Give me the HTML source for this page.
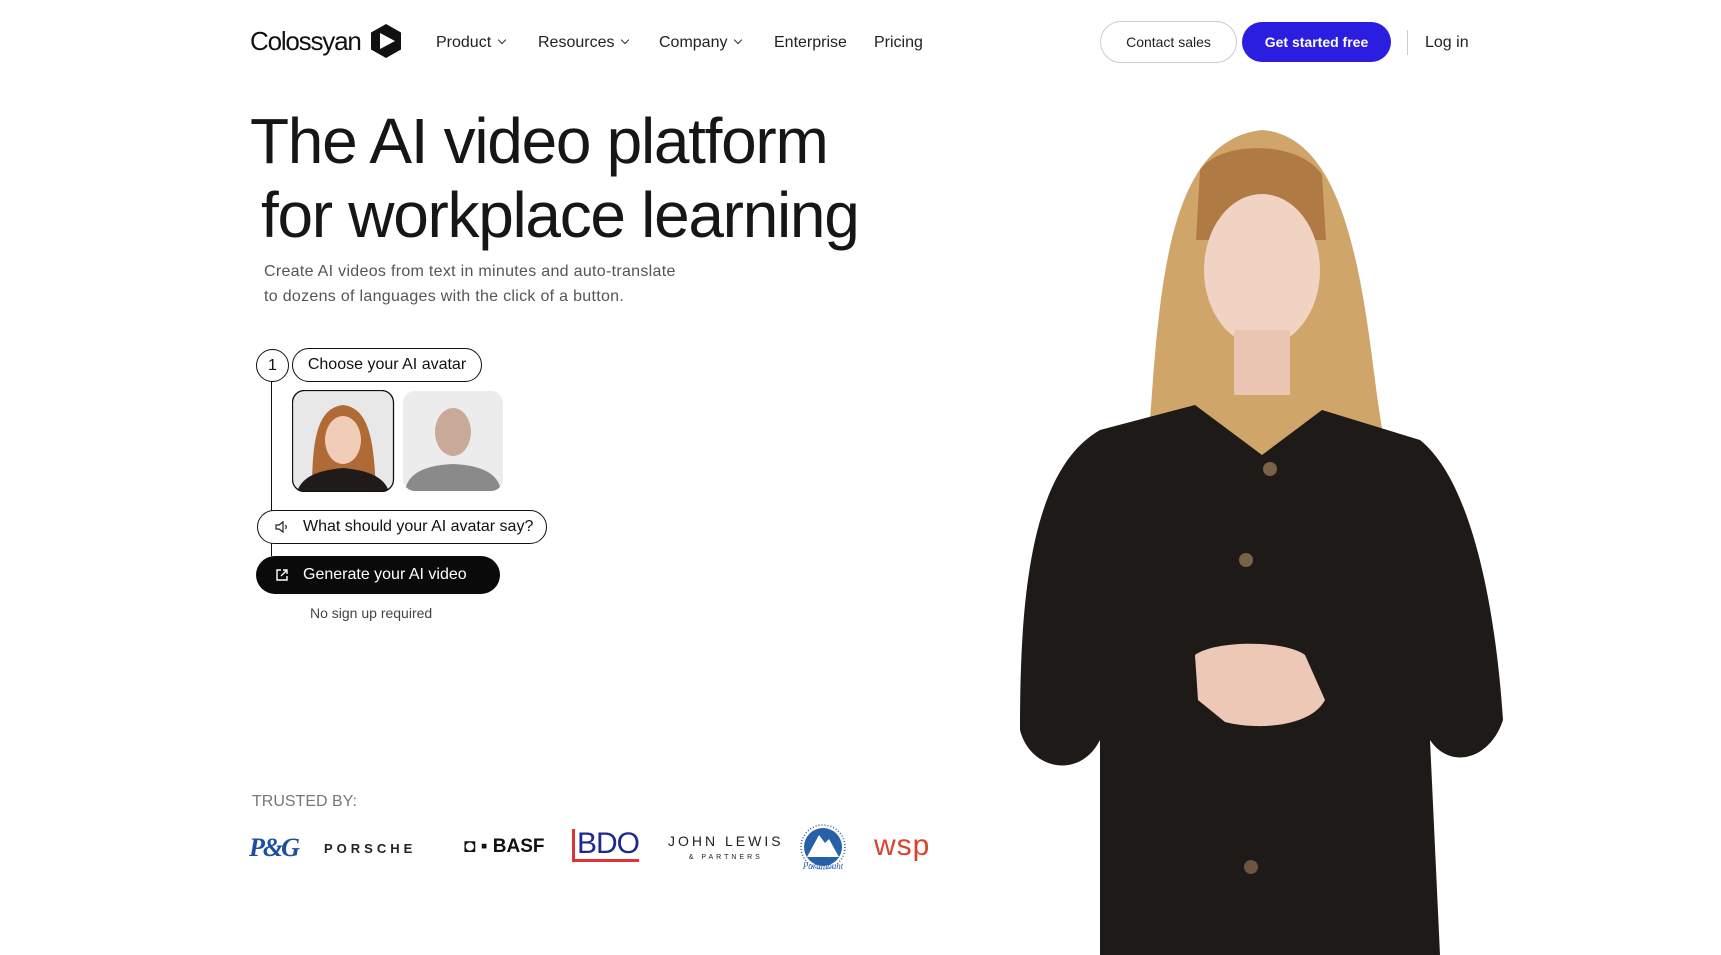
<!DOCTYPE html>
<html><head><meta charset="utf-8">
<style>
*{margin:0;padding:0;box-sizing:border-box}
body{width:1721px;height:955px;overflow:hidden;background:#fff;font-family:"Liberation Sans",sans-serif;color:#111;position:relative}
.a{position:absolute;white-space:nowrap}
.nav{font-size:16px;color:#222;top:34px}
.chev{display:inline-block;width:6px;height:6px;border-right:1.3px solid #333;border-bottom:1.3px solid #333;transform:rotate(45deg);margin-left:8px;position:relative;top:-4px}
h1{position:absolute;font-weight:400;font-size:64px;letter-spacing:-1.3px;color:#161616;line-height:74px}
.pill{position:absolute;border:1.3px solid #111;border-radius:20px;background:#fff;font-size:16px;display:flex;align-items:center;justify-content:center}
</style></head><body>
<div class="a" style="left:250px;top:26px;font-size:26px;letter-spacing:-1.2px;color:#111">Colossyan</div>
<svg class="a" style="left:370px;top:24px" width="32" height="34" viewBox="0 0 32 34"><path d="M16 0L31 8.5V25.5L16 34L1 25.5V8.5Z" fill="#111"/><path d="M10 9L25 17L10 25Z" fill="#fff"/></svg>
<div class="a nav" style="left:436px">Product<span class="chev"></span></div>
<div class="a nav" style="left:538px">Resources<span class="chev"></span></div>
<div class="a nav" style="left:659px">Company<span class="chev"></span></div>
<div class="a nav" style="left:774px">Enterprise</div>
<div class="a nav" style="left:874px">Pricing</div>
<div class="a" style="left:1100px;top:21px;width:137px;height:42px;border:1px solid #ccc;border-radius:21px;font-size:14px;display:flex;align-items:center;justify-content:center;color:#222">Contact sales</div>
<div class="a" style="left:1242px;top:22px;width:149px;height:40px;background:#2b1ee0;border-radius:20px;font-size:14px;font-weight:bold;display:flex;align-items:center;justify-content:center;color:#fff">Get started free</div>
<div class="a" style="left:1407px;top:30px;width:1px;height:25px;background:#ccc"></div>
<div class="a nav" style="left:1425px">Log in</div>

<h1 style="left:250px;top:104px">The AI video platform</h1>
<h1 style="left:261px;top:178px">for workplace learning</h1>
<div class="a" style="left:264px;top:259px;font-size:16px;color:#555;line-height:25px;letter-spacing:0.3px">Create AI videos from text in minutes and auto-translate<br>to dozens of languages with the click of a button.</div>

<div class="a" style="left:271px;top:381px;width:1.3px;height:175px;background:#111"></div>
<div class="pill" style="left:256px;top:349px;width:33px;height:33px;border-radius:50%">1</div>
<div class="pill" style="left:292px;top:348px;width:190px;height:34px">Choose your AI avatar</div>
<svg class="a" style="left:292px;top:390px" width="212" height="102">
<defs><clipPath id="c1"><rect x="0.5" y="0.5" width="101" height="101" rx="12"/></clipPath><clipPath id="c2"><rect x="111" y="1" width="100" height="100" rx="12"/></clipPath></defs>
<g clip-path="url(#c1)"><rect width="102" height="102" fill="#e8e8e8"/><path d="M20 102C20 50 25 18 51 15C77 18 82 50 84 102Z" fill="#b06a35"/><ellipse cx="51" cy="50" rx="18" ry="24" fill="#f1cdb8"/><path d="M5 102C10 85 30 80 51 78C72 80 92 85 97 102Z" fill="#1e1b18"/></g>
<rect x="0.5" y="0.5" width="101" height="101" rx="12" fill="none" stroke="#111" stroke-width="1.3"/>
<g clip-path="url(#c2)"><rect x="111" width="100" height="102" fill="#ececec"/><ellipse cx="161" cy="42" rx="18" ry="24" fill="#c9aa98"/><path d="M113 102C115 80 140 75 161 74C182 75 207 80 209 102Z" fill="#8a8a8a"/></g>
</svg>
<div class="pill" style="left:257px;top:510px;width:290px;height:34px;justify-content:flex-start;padding-left:45px">What should your AI avatar say?</div>
<svg class="a" style="left:275px;top:520px" width="14" height="14" viewBox="0 0 14 14"><path d="M1 5H4L8 2V12L4 9H1Z" fill="none" stroke="#222" stroke-width="1.2"/><path d="M10.5 5Q12 7 10.5 9" fill="none" stroke="#222" stroke-width="1.2"/></svg>
<div class="a" style="left:256px;top:556px;width:244px;height:38px;background:#0a0a0a;border-radius:19px;color:#fff;font-size:16px;display:flex;align-items:center;padding-left:47px">Generate your AI video</div>
<svg class="a" style="left:275px;top:568px" width="14" height="14" viewBox="0 0 14 14"><path d="M6 2H2V12H12V8M8 2H12V6M12 2L6 8" fill="none" stroke="#fff" stroke-width="1.4"/></svg>
<div class="a" style="left:310px;top:605px;font-size:14px;color:#444">No sign up required</div>

<div class="a" style="left:252px;top:793px;font-size:16px;color:#777">TRUSTED BY:</div>
<div class="a" style="left:249px;top:833px;font-size:26px;font-style:italic;font-weight:bold;color:#1c4fa0;font-family:'Liberation Serif',serif;letter-spacing:-2px">P&amp;G</div>
<div class="a" style="left:324px;top:841px;font-size:13px;font-weight:bold;letter-spacing:4px;color:#222">PORSCHE</div>
<div class="a" style="left:464px;top:836px;font-size:19px;font-weight:bold;color:#111">◘ ▪ BASF</div>
<div class="a" style="left:572px;top:829px;font-size:30px;color:#1c2a8f;letter-spacing:-1px;border-bottom:3px solid #d33;line-height:30px;border-left:3px solid #d33;padding-left:2px">BDO</div>
<div class="a" style="left:668px;top:835px;font-size:14px;letter-spacing:3px;color:#222;text-align:center;line-height:13px">JOHN LEWIS<br><span style="font-size:7px">&amp; PARTNERS</span></div>
<svg class="a" style="left:799px;top:823px" width="48" height="50"><circle cx="24" cy="24" r="22" fill="none" stroke="#2860a8" stroke-width="1.5" stroke-dasharray="1 2"/><circle cx="24" cy="24" r="19" fill="#2860a8"/><path d="M8 34L20 12L26 20L30 16L40 34Z" fill="#fff"/><text x="24" y="46" font-size="9" font-style="italic" fill="#2860a8" text-anchor="middle" font-family="Liberation Serif">Paramount</text></svg>
<div class="a" style="left:874px;top:829px;font-size:30px;color:#d9432c;letter-spacing:1px">wsp</div>

<svg class="a" style="left:0;top:0" width="1721" height="955" viewBox="0 0 1721 955">
<path d="M1150 420C1160 280 1170 140 1262 130C1340 136 1360 260 1375 380C1385 460 1400 520 1410 580L1140 580C1145 520 1148 470 1150 420Z" fill="#d0a56a"/>
<path d="M1200 170C1220 140 1300 140 1322 175L1326 240L1196 240Z" fill="#b07a45"/>
<ellipse cx="1262" cy="270" rx="58" ry="76" fill="#f1d3c4"/>
<path d="M1234 330H1290V395H1234Z" fill="#eac5b2"/>
<path d="M1020 730C1020 600 1030 470 1100 430L1195 405L1262 455L1322 410L1420 440C1470 480 1495 600 1503 720C1490 760 1450 770 1430 740L1440 955H1100L1100 740C1080 780 1030 770 1020 730Z" fill="#1e1a17"/>
<path d="M1195 655C1215 640 1285 640 1305 655L1325 700C1310 728 1255 730 1225 722L1198 700Z" fill="#edc8b6"/>
<circle cx="1270" cy="469" r="7" fill="#7a6248"/><circle cx="1246" cy="560" r="7" fill="#7a6248"/><circle cx="1251" cy="867" r="7" fill="#6a553e"/>
</svg>
</body></html>
